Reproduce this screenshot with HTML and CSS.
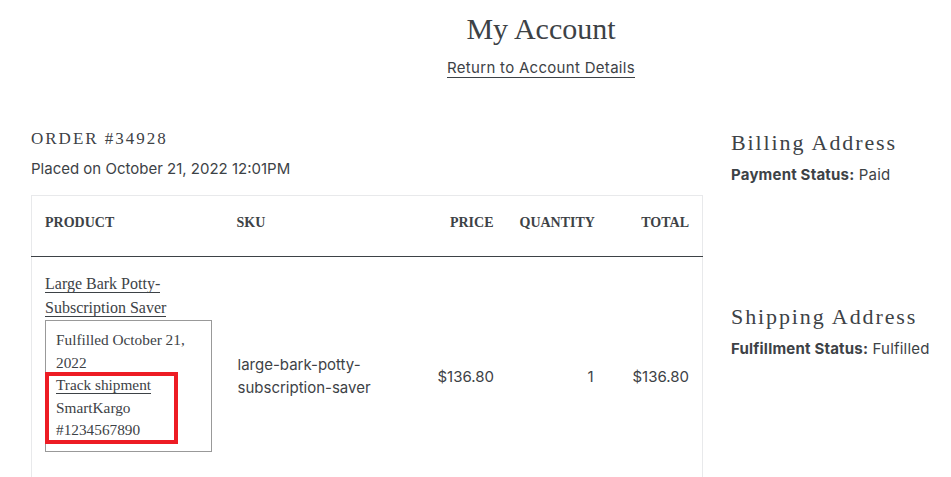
FILE: index.html
```html
<!DOCTYPE html>
<html>
<head>
<meta charset="utf-8">
<link rel="stylesheet" href="styles.css">
</head>
<body>
<div class="page">
  <header class="head">
    <h1 class="title">My Account</h1>
    <a class="return" href="#">Return to Account Details</a>
  </header>
  <main class="main">
    <section class="order">
      <h2 class="order-no">ORDER #34928</h2>
      <p class="placed">Placed on October 21, 2022 12:01PM</p>
      <table class="items">
        <colgroup>
          <col class="c-prod"><col class="c-sku"><col class="c-price"><col class="c-qty"><col class="c-total">
        </colgroup>
        <thead>
          <tr>
            <th class="l">PRODUCT</th>
            <th class="l">SKU</th>
            <th class="r">PRICE</th>
            <th class="r">QUANTITY</th>
            <th class="r">TOTAL</th>
          </tr>
        </thead>
        <tbody>
          <tr>
            <td class="prod">
              <a class="prod-link" href="#">Large Bark Potty-<br>Subscription Saver</a>
              <div class="fulfil">
                <div>Fulfilled October 21, 2022</div>
                <div class="mark">
                  <a class="track" href="#">Track shipment</a>
                  <div>SmartKargo</div>
                  <div>#1234567890</div>
                </div>
              </div>
            </td>
            <td class="sku">large-bark-potty-<br>subscription-saver</td>
            <td class="num">$136.80</td>
            <td class="num">1</td>
            <td class="num">$136.80</td>
          </tr>
        </tbody>
      </table>
    </section>
    <aside class="side">
      <div class="addr">
        <h3 class="addr-title">Billing Address</h3>
        <p class="status"><b>Payment Status:</b> Paid</p>
      </div>
      <div class="addr ship">
        <h3 class="addr-title">Shipping Address</h3>
        <p class="status"><b>Fulfillment Status:</b> Fulfilled</p>
      </div>
    </aside>
  </main>
</div>
</body>
</html>
```

FILE: styles.css
```css
html, body {
  margin: 0;
  padding: 0;
  background: #fff;
  overflow: hidden;
}
body {
  color: #3d4246;
  font-family: Inter, "Open Sans", sans-serif;
}
.page {
  width: 1082px;
}
.head {
  display: flex;
  flex-direction: column;
  align-items: center;
  padding-top: 10px;
}
.title {
  margin: 0;
  font-family: "Liberation Serif", serif;
  font-weight: normal;
  font-size: 30px;
  line-height: 38px;
}
.return {
  margin-top: 11px;
  color: #3d4246;
  text-decoration: none;
  font-size: 15px;
  line-height: 18px;
  border-bottom: 1px solid #3d4246;
  letter-spacing: 0.3px;
}
.main {
  display: flex;
  gap: 30px;
  padding-left: 31px;
  margin-top: 49px;
}
.order {
  width: 670px;
  flex: none;
}
.order-no {
  margin: 0;
  font-family: "Liberation Serif", serif;
  font-weight: normal;
  font-size: 17px;
  letter-spacing: 2px;
  line-height: 24px;
}
.placed {
  margin: 8px 0 0;
  font-size: 15px;
  line-height: 20px;
}
.items {
  margin-top: 16px;
  width: 671px;
  border-collapse: collapse;
  table-layout: fixed;
  border: 1px solid #e8e9eb;
  border-bottom: none;
}
.c-prod { width: 192px; }
.c-sku { width: 200px; }
.c-price { width: 83px; }
.c-qty { width: 100px; }
.c-total { width: 96px; }
.items th {
  font-family: "Liberation Serif", serif;
  font-size: 14px;
  font-weight: bold;
  color: #3d4246;
  height: 54px;
  padding: 0 13px 6px 13px;
  border-bottom: 1px solid #3d4246;
}
.items th.l { text-align: left; }
.items th.r { text-align: right; }
.items td {
  padding: 15px 13px 15px 14px;
  font-size: 15px;
  line-height: 22.5px;
  vertical-align: middle;
}
.items td.prod {
  padding-left: 13px;
  padding-right: 12px;
  font-family: "Liberation Serif", serif;
  vertical-align: top;
}
.prod-link {
  color: #3d4246;
  text-decoration: none;
  border-bottom: 1px solid #3d4246;
  font-size: 16px;
  line-height: 23px;
}
.fulfil {
  margin-top: 1px;
  margin-bottom: 30px;
  border: 1px solid #999;
  padding: 8px 10px 9px;
  font-size: 15.3px;
  line-height: 22.5px;
}
.mark {
  position: relative;
}
.mark::after {
  content: "";
  position: absolute;
  left: -11px;
  top: -2px;
  width: 133px;
  height: 72px;
  box-sizing: border-box;
  border: 4px solid #ed1c24;
}
.track {
  color: #3d4246;
  text-decoration: none;
  border-bottom: 1px solid #3d4246;
}
.num {
  text-align: right;
}
.side {
  width: 240px;
  flex: none;
  padding-top: 2px;
}
.addr-title {
  margin: 0;
  font-family: "Liberation Serif", serif;
  font-weight: normal;
  font-size: 22px;
  letter-spacing: 1.9px;
  line-height: 28px;
}
.status {
  margin: 8px 0 0;
  font-size: 15px;
  line-height: 20px;
  letter-spacing: 0.2px;
}
.status b {
  font-weight: 700;
}
.ship {
  margin-top: 118px;
}
```
